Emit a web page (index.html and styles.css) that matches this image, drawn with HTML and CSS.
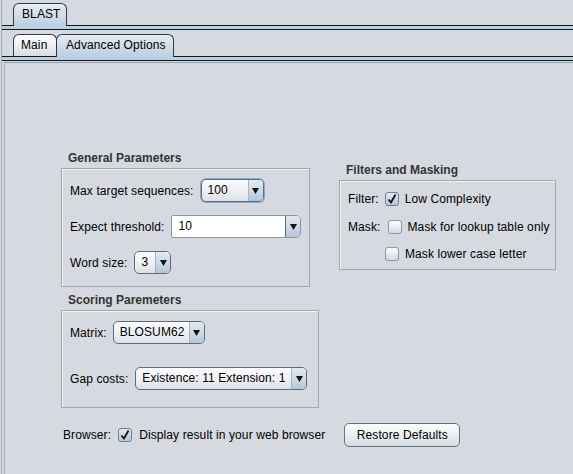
FILE: index.html
```html
<!DOCTYPE html>
<html>
<head>
<meta charset="utf-8">
<link rel="stylesheet" href="styles.css">
</head>
<body>
<div class="window">
  <div class="tabrow">
    <div class="tab sel blast">BLAST</div>
  </div>
  <div class="band"></div>
  <div class="tabrow">
    <div class="tab main">Main</div>
    <div class="tab sel adv">Advanced Options</div>
  </div>
  <div class="band"></div>
  <div class="panel">
    <div class="content">
      <div class="col left">
        <div class="title">General Parameters</div>
        <div class="box general">
          <div class="row">
            <span class="lbl">Max target sequences:</span>
            <div class="combo focus w-max"><span class="val">100</span><span class="arrow"><svg width="7" height="6" viewBox="0 0 7 6"><polygon points="0,0 7,0 3.5,6" fill="#111"/></svg></span></div>
          </div>
          <div class="row">
            <span class="lbl">Expect threshold:</span>
            <div class="combo edit w-exp"><span class="val">10</span><span class="arrow"><svg width="7" height="6" viewBox="0 0 7 6"><polygon points="0,0 7,0 3.5,6" fill="#111"/></svg></span></div>
          </div>
          <div class="row">
            <span class="lbl">Word size:</span>
            <div class="combo w-word"><span class="val">3</span><span class="arrow"><svg width="7" height="6" viewBox="0 0 7 6"><polygon points="0,0 7,0 3.5,6" fill="#111"/></svg></span></div>
          </div>
        </div>
        <div class="title t2">Scoring Paremeters</div>
        <div class="box scoring">
          <div class="row">
            <span class="lbl">Matrix:</span>
            <div class="combo w-mat"><span class="val">BLOSUM62</span><span class="arrow"><svg width="7" height="6" viewBox="0 0 7 6"><polygon points="0,0 7,0 3.5,6" fill="#111"/></svg></span></div>
          </div>
          <div class="row r-gap">
            <span class="lbl">Gap costs:</span>
            <div class="combo w-gap"><span class="val">Existence: 11 Extension: 1</span><span class="arrow"><svg width="7" height="6" viewBox="0 0 7 6"><polygon points="0,0 7,0 3.5,6" fill="#111"/></svg></span></div>
          </div>
        </div>
      </div>
      <div class="col right">
        <div class="title">Filters and Masking</div>
        <div class="box filters">
          <div class="crow">
            <span class="lbl">Filter:</span>
            <span class="cb on"><svg width="12" height="12" viewBox="0 0 12 12"><path d="M2.5 6.5 L5 9.5 L9.5 1.5" fill="none" stroke="#111" stroke-width="1.8"/></svg></span>
            <span class="cbtext">Low Complexity</span>
          </div>
          <div class="crow r2">
            <span class="lbl">Mask:</span>
            <span class="cb mask"></span>
            <span class="cbtext">Mask for lookup table only</span>
          </div>
          <div class="crow r3">
            <span class="cb indent"></span>
            <span class="cbtext">Mask lower case letter</span>
          </div>
        </div>
      </div>
      <div class="bottom">
        <span class="lbl">Browser:</span>
        <span class="cb on"><svg width="12" height="12" viewBox="0 0 12 12"><path d="M2.5 6.5 L5 9.5 L9.5 1.5" fill="none" stroke="#111" stroke-width="1.8"/></svg></span>
        <span class="cbtext">Display result in your web browser</span>
        <button class="btn">Restore Defaults</button>
      </div>
    </div>
  </div>
</div>
</body>
</html>
```

FILE: styles.css
```css
html, body {
  margin: 0;
  padding: 0;
  background: #d6d9df;
  font-family: "Liberation Sans", Arial, sans-serif;
  font-size: 12px;
  color: #000;
}
.window {
  margin-left: 1px;
  border-left: 1px solid #a7abb3;
  height: 474px;
  box-sizing: border-box;
  overflow: hidden;
}
.tabrow {
  height: 25px;
  display: flex;
  align-items: flex-end;
  padding-left: 11px;
  position: relative;
  z-index: 2;
}
.tab {
  box-sizing: border-box;
  height: 22px;
  border: 1px solid #2e3847;
  border-bottom: none;
  border-radius: 6px 6px 0 0;
  line-height: 21px;
  white-space: nowrap;
  letter-spacing: 0.1px;
  background: linear-gradient(#fdfdfe, #eef0f3 45%, #d9dde3);
}
.tab.sel {
  height: 23px;
  margin-bottom: -1px;
  background: linear-gradient(#e6edf4, #d3dfea 45%, #bccfe1);
}
.blast { width: 54px; padding-left: 8px; }
.main { width: 44px; padding-left: 7px; }
.adv { width: 118px; padding-left: 9px; margin-left: -1px; }
.band {
  height: 5px;
  box-sizing: border-box;
  border-top: 1px solid #0d1726;
  border-bottom: 1px solid #0d1726;
  background: #bccfe1;
  position: relative;
  z-index: 1;
}
.tabrow:nth-child(3) { height: 26px; }
.panel {
  margin-top: 1px;
  margin-left: 2px;
  border-top: 1px solid #9ea3ab;
  border-left: 1px solid #a3a8b0;
  height: 420px;
}
.content {
  padding: 88px 0 0 56px;
  display: grid;
  grid-template-columns: 258px 220px;
  column-gap: 20px;
  align-items: start;
}
.title {
  font-weight: bold;
  color: #333;
  line-height: 15px;
  height: 15px;
  padding-left: 7px;
  margin-bottom: 2px;
}
.t2 { margin-top: 6px; }
.box {
  box-sizing: border-box;
  border: 1px solid #a3a8af;
  box-shadow: inset 1px 1px 0 #f3f4f6;
}
.general {
  width: 249px;
  height: 119px;
  padding: 10px 0 0 8px;
}
.scoring {
  width: 258px;
  height: 98px;
  padding: 10px 0 0 8px;
}
.row {
  display: flex;
  align-items: center;
  height: 23px;
  margin-bottom: 13px;
  gap: 7px;
}
.r-gap { margin-top: 23px; }
.lbl, .cbtext, .val, .btn { letter-spacing: 0.1px; }
.lbl { white-space: nowrap; }
.scoring .row:first-child { gap: 6px; }
.combo {
  box-sizing: border-box;
  height: 23px;
  display: flex;
  border: 1px solid #5d6b7d;
  border-radius: 5px;
  background: linear-gradient(#fdfdfe, #f0f2f5 45%, #dde2e8);
  overflow: hidden;
  flex: none;
}
.combo .val {
  flex: 1;
  padding-left: 6px;
  line-height: 21px;
  white-space: nowrap;
}
.combo .arrow {
  width: 14px;
  border-left: 1px solid #a8b3c0;
  background: linear-gradient(#e3eaf1, #cfdbe7 50%, #b2c5d8);
  display: flex;
  align-items: center;
  justify-content: center;
}
.combo.focus {
  box-shadow: 0 0 0 1px #80acd7;
}
.combo.edit {
  background: #fff;
  border-color: #8896a6;
  border-radius: 2px 5px 5px 2px;
}
.combo.edit .arrow {
  border-left: 1px solid #5d6b7d;
}
.w-max { width: 63px; }
.w-exp { width: 130px; }
.w-word { width: 37px; }
.w-mat { width: 92px; }
.w-gap { width: 172px; }
.right { margin-top: 12px; }
.filters {
  width: 217px;
  height: 90px;
  padding: 9px 0 0 8px;
}
.crow {
  display: flex;
  align-items: center;
  height: 18px;
}
.r2 { margin-top: 10px; }
.r3 { margin-top: 9px; }
.crow .lbl { margin-right: 6px; }
.r2 .lbl { margin-right: 7px; }
.r2 .cbtext { margin-left: 6px; }
.indent { margin-left: 37px; }
.cb {
  box-sizing: border-box;
  width: 14px;
  height: 14px;
  border: 1px solid #8c96a3;
  border-radius: 3px;
  background: linear-gradient(#fdfdfe, #e9ecf0 50%, #d5dbe2);
  display: flex;
  align-items: center;
  justify-content: center;
  flex: none;
}
.cb.on {
  background: linear-gradient(#e4ebf2, #c9d7e5 50%, #b4c7da);
  border-color: #6f7f92;
}
.cbtext { margin-left: 6px; white-space: nowrap; }
.bottom {
  grid-column: 1 / 3;
  display: flex;
  align-items: center;
  height: 24px;
  margin-top: 15px;
  padding-left: 2px;
}
.bottom .lbl { margin-right: 7px; }
.bottom .cbtext { margin-left: 7px; }
.btn {
  margin-left: 19px;
  box-sizing: border-box;
  width: 116px;
  height: 24px;
  border: 1px solid #68717d;
  border-radius: 5px;
  background: linear-gradient(#fcfcfd, #eef0f3 45%, #d6dbe1);
  font-family: "Liberation Sans", Arial, sans-serif;
  font-size: 12px;
  color: #000;
  padding: 0;
}
```
